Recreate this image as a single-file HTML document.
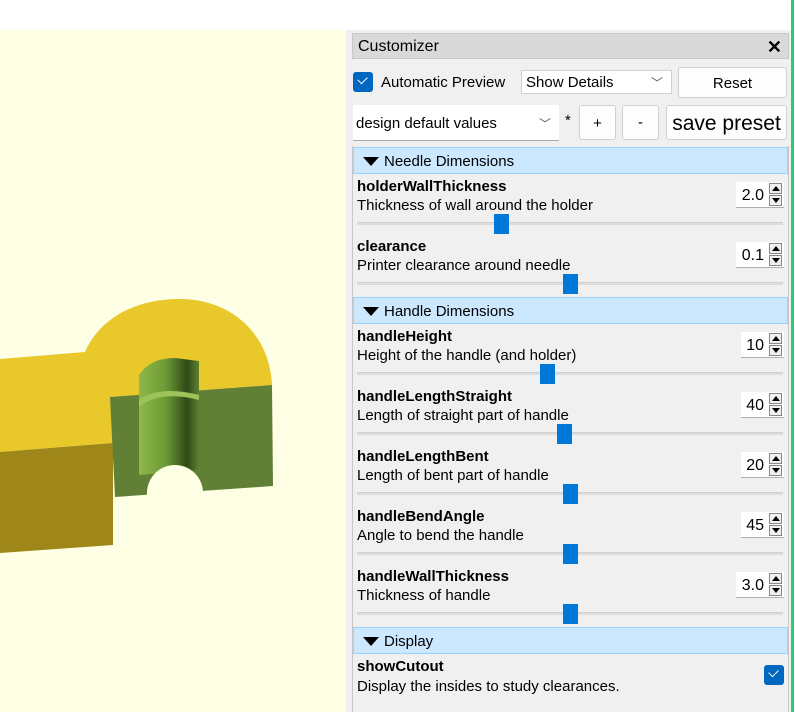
<!DOCTYPE html>
<html><head><meta charset="utf-8"><style>
*{margin:0;padding:0;box-sizing:border-box}
body{width:795px;height:712px;overflow:hidden;background:#fff;font-family:"Liberation Sans",sans-serif;position:relative;font-size:15px;color:#000}
.a{position:absolute}
.vp{left:0;top:30px;width:346px;height:682px;background:#ffffe5}
.panel{left:346px;top:30px;width:445px;height:682px;background:#f0f0f0}
.green{left:791px;top:0;width:3px;height:712px;background:#2ecc71}
.frame{left:352px;top:146px;width:437px;height:566px;border-left:1px solid #c8c8c8;border-right:1px solid #c8c8c8}
.title{left:352px;top:33px;width:437px;height:26px;background:#d9d9d9;border:1px solid #c8c8c8;font-size:16px;line-height:26px;padding-left:5px}
.btn{background:#fdfdfd;border:1px solid #d0d0d0;border-radius:3px;text-align:center}
.hdr{left:353px;width:435px;height:27px;background:#cce8ff;border:1px solid #99d1ff;line-height:27px;padding-left:30px;font-size:15px}
.tri{position:absolute;left:9px;top:9px;width:0;height:0;border-left:8px solid transparent;border-right:8px solid transparent;border-top:9px solid #000}
.nm{left:357px;font-weight:bold;font-size:15px;line-height:18px}
.ds{left:357px;font-size:15px;line-height:18px}
.tr{left:357px;width:426px;height:3px;background:#dcdcdc;border-top:1px solid #d0d0d0}
.hd{width:15px;height:20px;background:#0078d7}
.sp{background:#fff;border-bottom:1px solid #b0b0b0;font-size:16px;line-height:28px;text-align:right;padding-right:20px;height:26px}
.ar{position:absolute;right:2px;width:13px;height:11px;border:1px solid #888;background:#f0f0f0}
.ar i{position:absolute;left:2px;width:0;height:0;border-left:4px solid transparent;border-right:4px solid transparent}
.chk{width:20px;height:20px;background:#0067c0;border-radius:3px}
.chk:after{content:"";position:absolute;left:5px;top:4px;width:8px;height:5px;border-left:1.5px solid #fff;border-bottom:1.5px solid #fff;transform:rotate(-45deg)}
</style></head><body>
<div class="a vp"></div>
<svg class="a" style="left:0;top:0" width="346" height="712">
<defs><linearGradient id="cy" x1="0" x2="1"><stop offset="0" stop-color="#8fb84a"/><stop offset="0.45" stop-color="#6b9a35"/><stop offset="0.8" stop-color="#2f4a16"/><stop offset="1" stop-color="#5f8030"/></linearGradient></defs>
<path d="M0,359 L85,352 C100,318 135,299 180,299 C232,299 270,335 272,385 L110,397 L113,443 L0,452 Z" fill="#e8c82a"/>
<path d="M0,452 L113,443 L113,545 L0,553 Z" fill="#9e8618"/>
<path d="M110,397 L272,385 L273,486 L115,497 Z" fill="#617f35"/>
<path d="M139,375 Q150,358 175,358 L199,361 L199,470 L139,475 Z" fill="url(#cy)"/>
<path d="M139,400 Q160,385 199,395 L199,400 Q160,390 139,407 Z" fill="#9cc458"/>
<path d="M147,494 A28,28 0 0 1 203,492 L203,500 L147,500 Z" fill="#ffffe5"/>
</svg>
<div class="a panel"></div>
<div class="a green"></div>
<div class="a frame"></div>
<div class="a title">Customizer<span style="position:absolute;right:6px;top:0;font-weight:bold;font-size:18px">✕</span></div>
<div class="a chk" style="left:353px;top:72px"></div>
<div class="a" style="left:381px;top:74px;line-height:18px">Automatic Preview</div>
<div class="a" style="left:521px;top:70px;width:151px;height:24px;background:#fff;border:1px solid #d0d0d0;line-height:24px;padding-left:4px">Show Details<span style="position:absolute;right:8px;top:0;color:#555;font-size:12px">﹀</span></div>
<div class="a btn" style="left:678px;top:67px;width:109px;height:31px;line-height:31px">Reset</div>
<div class="a" style="left:353px;top:105px;width:206px;height:36px;background:#fff;border-bottom:1px solid #aaa;line-height:38px;padding-left:3px">design default values<span style="position:absolute;right:8px;top:0;color:#555;font-size:12px">﹀</span></div>
<div class="a" style="left:565px;top:112px">*</div>
<div class="a btn" style="left:579px;top:105px;width:37px;height:35px;line-height:35px">+</div>
<div class="a btn" style="left:622px;top:105px;width:37px;height:35px;line-height:33px">-</div>
<div class="a btn" style="left:666px;top:105px;width:121px;height:35px;line-height:36px;font-size:21px">save preset</div>

<div class="a hdr" style="top:147px"><span class="tri"></span>Needle Dimensions</div>
<div class="a hdr" style="top:297px"><span class="tri"></span>Handle Dimensions</div>
<div class="a hdr" style="top:627px"><span class="tri"></span>Display</div>

<div class="a nm" style="top:178px">holderWallThickness</div>
<div class="a ds" style="top:197px">Thickness of wall around the holder</div>
<div class="a tr" style="top:222px"></div><div class="a hd" style="left:494px;top:214px"></div>
<div class="a sp" style="left:736px;top:182px;width:48px">2.0<span class="ar" style="top:1px"><i style="top:2px;border-bottom:5px solid #000"></i></span><span class="ar" style="top:13px"><i style="top:2px;border-top:5px solid #000"></i></span></div>

<div class="a nm" style="top:238px">clearance</div>
<div class="a ds" style="top:257px">Printer clearance around needle</div>
<div class="a tr" style="top:282px"></div><div class="a hd" style="left:563px;top:274px"></div>
<div class="a sp" style="left:736px;top:242px;width:48px">0.1<span class="ar" style="top:1px"><i style="top:2px;border-bottom:5px solid #000"></i></span><span class="ar" style="top:13px"><i style="top:2px;border-top:5px solid #000"></i></span></div>

<div class="a nm" style="top:328px">handleHeight</div>
<div class="a ds" style="top:347px">Height of the handle (and holder)</div>
<div class="a tr" style="top:372px"></div><div class="a hd" style="left:540px;top:364px"></div>
<div class="a sp" style="left:741px;top:332px;width:43px">10<span class="ar" style="top:1px"><i style="top:2px;border-bottom:5px solid #000"></i></span><span class="ar" style="top:13px"><i style="top:2px;border-top:5px solid #000"></i></span></div>

<div class="a nm" style="top:388px">handleLengthStraight</div>
<div class="a ds" style="top:407px">Length of straight part of handle</div>
<div class="a tr" style="top:432px"></div><div class="a hd" style="left:557px;top:424px"></div>
<div class="a sp" style="left:741px;top:392px;width:43px">40<span class="ar" style="top:1px"><i style="top:2px;border-bottom:5px solid #000"></i></span><span class="ar" style="top:13px"><i style="top:2px;border-top:5px solid #000"></i></span></div>

<div class="a nm" style="top:448px">handleLengthBent</div>
<div class="a ds" style="top:467px">Length of bent part of handle</div>
<div class="a tr" style="top:492px"></div><div class="a hd" style="left:563px;top:484px"></div>
<div class="a sp" style="left:741px;top:452px;width:43px">20<span class="ar" style="top:1px"><i style="top:2px;border-bottom:5px solid #000"></i></span><span class="ar" style="top:13px"><i style="top:2px;border-top:5px solid #000"></i></span></div>

<div class="a nm" style="top:508px">handleBendAngle</div>
<div class="a ds" style="top:527px">Angle to bend the handle</div>
<div class="a tr" style="top:552px"></div><div class="a hd" style="left:563px;top:544px"></div>
<div class="a sp" style="left:741px;top:512px;width:43px">45<span class="ar" style="top:1px"><i style="top:2px;border-bottom:5px solid #000"></i></span><span class="ar" style="top:13px"><i style="top:2px;border-top:5px solid #000"></i></span></div>

<div class="a nm" style="top:568px">handleWallThickness</div>
<div class="a ds" style="top:587px">Thickness of handle</div>
<div class="a tr" style="top:612px"></div><div class="a hd" style="left:563px;top:604px"></div>
<div class="a sp" style="left:736px;top:572px;width:48px">3.0<span class="ar" style="top:1px"><i style="top:2px;border-bottom:5px solid #000"></i></span><span class="ar" style="top:13px"><i style="top:2px;border-top:5px solid #000"></i></span></div>

<div class="a nm" style="top:658px">showCutout</div>
<div class="a ds" style="top:678px">Display the insides to study clearances.</div>
<div class="a chk" style="left:764px;top:665px"></div>
</body></html>
